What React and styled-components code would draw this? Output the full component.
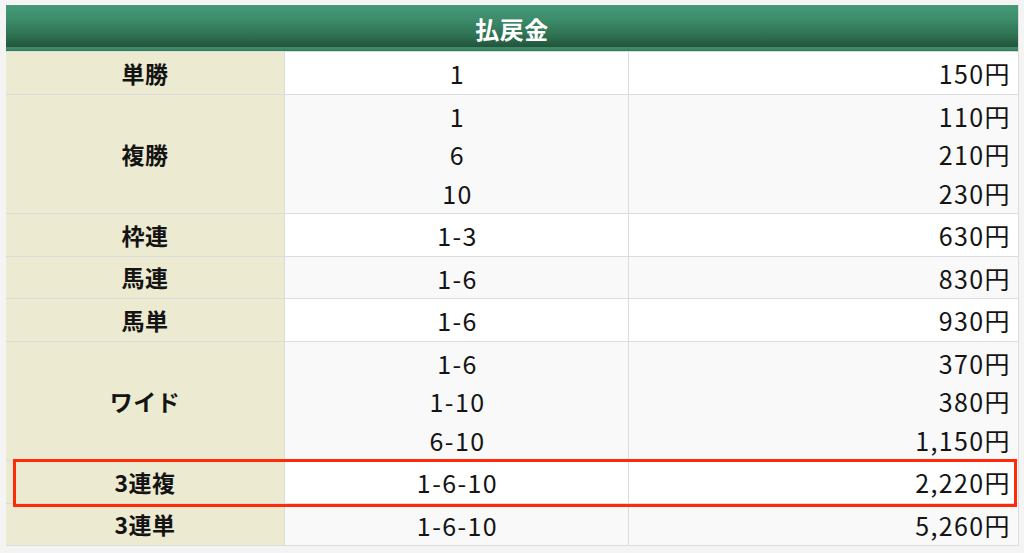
import React from 'react';
import styled, { createGlobalStyle } from 'styled-components';

const GlobalStyle = createGlobalStyle`
  html, body {
    margin: 0;
    background: #f4f4f4;
  }
  body {
    font-family: "Noto Sans CJK JP", "Noto Sans", sans-serif;
    color: #141414;
  }
`;

const payouts = [
  { label: '単勝', combos: ['1'], amounts: ['150円'] },
  { label: '複勝', combos: ['1', '6', '10'], amounts: ['110円', '210円', '230円'] },
  { label: '枠連', combos: ['1-3'], amounts: ['630円'] },
  { label: '馬連', combos: ['1-6'], amounts: ['830円'] },
  { label: '馬単', combos: ['1-6'], amounts: ['930円'] },
  { label: 'ワイド', combos: ['1-6', '1-10', '6-10'], amounts: ['370円', '380円', '1,150円'] },
  { label: '3連複', combos: ['1-6-10'], amounts: ['2,220円'], marked: true },
  { label: '3連単', combos: ['1-6-10'], amounts: ['5,260円'] },
];

const Page = styled.div`
  padding: 5px 5px 4px 6px;
`;

const Table = styled.div`
  border-right: 1px solid #dcdcdc;
  border-bottom: 1px solid #dcdcdc;
`;

const Header = styled.div`
  height: 46px;
  display: flex;
  align-items: center;
  justify-content: center;
  color: #fff;
  font-size: 24px;
  font-weight: 700;
  letter-spacing: 0.5px;
  background: linear-gradient(
    to bottom,
    #459a7a 0px,
    #3d8c6b 14px,
    #2f7253 30px,
    #24563d 41px,
    #24563d 42px,
    #3d8c68 42px,
    #3a8864 45px,
    #2c6a4c 46px
  );
`;

const Row = styled.div`
  position: relative;
  display: grid;
  grid-template-columns: 279px 344px 1fr;
  background: ${({ $shade }) => ($shade ? '#f9f9f9' : '#ffffff')};
  border-top: 1px solid #dcdcdc;
`;

const Label = styled.div`
  background: #ecead0;
  display: flex;
  align-items: center;
  justify-content: center;
  font-size: 23px;
  font-weight: 700;
  letter-spacing: 0.5px;
  border-right: 1px solid #dcdcdc;
`;

const Cell = styled.div`
  padding: 2px 7px 1px 9px;
  display: flex;
  flex-direction: column;
  align-items: ${({ $align }) => ($align === 'right' ? 'flex-end' : 'center')};
  font-size: 25px;
  letter-spacing: 1.4px;
  line-height: 38.5px;
  border-right: ${({ $divider }) => ($divider ? '1px solid #dcdcdc' : 'none')};
`;

const Mark = styled.div`
  position: absolute;
  z-index: 2;
  left: 7px;
  right: 1px;
  top: -2px;
  bottom: -4px;
  border: 3.5px solid #ff2a0a;
  pointer-events: none;
`;

export default function App() {
  return (
    <Page>
      <GlobalStyle />
      <Table>
        <Header>払戻金</Header>
        {payouts.map((p, i) => (
          <Row key={p.label} $shade={i % 2 === 1}>
            <Label>{p.label}</Label>
            <Cell $divider>
              {p.combos.map((c) => (
                <span key={c}>{c}</span>
              ))}
            </Cell>
            <Cell $align="right">
              {p.amounts.map((a) => (
                <span key={a}>{a}</span>
              ))}
            </Cell>
            {p.marked && <Mark />}
          </Row>
        ))}
      </Table>
    </Page>
  );
}
